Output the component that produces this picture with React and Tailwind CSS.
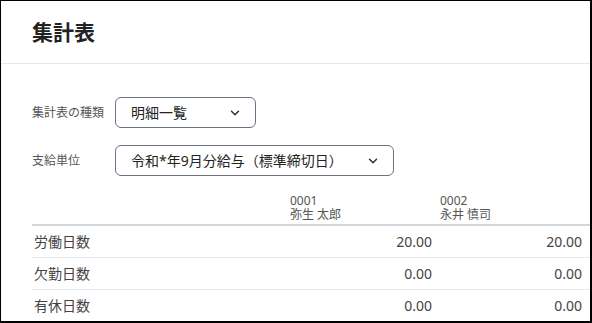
import { ChevronDown } from "lucide-react";

const employees = [
  { code: "0001", name: "弥生 太郎" },
  { code: "0002", name: "永井 慎司" },
];

const rows = [
  { label: "労働日数", values: ["20.00", "20.00"] },
  { label: "欠勤日数", values: ["0.00", "0.00"] },
  { label: "有休日数", values: ["0.00", "0.00"] },
];

function Select({ value, width }) {
  return (
    <div
      className={`${width} h-[31px] flex items-center justify-between pl-[15px] pr-[13px] border border-gray-500 rounded-md text-[14px] text-[#222]`}
    >
      <span>{value}</span>
      <ChevronDown size={14} strokeWidth={2.6} className="text-[#333]" />
    </div>
  );
}

export default function App() {
  return (
    <div
      className="w-[592px] h-[323px] overflow-hidden bg-white border-l border-t border-r-2 border-b-2 border-black"
      style={{ fontFamily: '"Noto Sans", "Noto Sans CJK JP", sans-serif' }}
    >
      <div className="h-[63px] flex items-center px-[31px] border-b border-gray-200">
        <h1 className="text-[21px] font-bold text-[#222] pt-[1px]">集計表</h1>
      </div>

      <div className="pl-[31px] pt-[33px] space-y-[17px]">
        <div className="flex items-center">
          <p className="w-[83px] text-[12px] text-[#555]">集計表の種類</p>
          <Select value="明細一覧" width="w-[141px]" />
        </div>
        <div className="flex items-center">
          <p className="w-[83px] text-[12px] text-[#555]">支給単位</p>
          <Select value="令和*年9月分給与（標準締切日）" width="w-[279px]" />
        </div>
      </div>

      <div className="ml-[31px] mt-[18px]">
        <div className="grid grid-cols-[254px_150px_150px] border-b-2 border-gray-300 pb-[2px]">
          <div />
          {employees.map((e) => (
            <p key={e.code} className="pl-[4px] text-[12px] leading-[14px] text-[#555]">
              {e.code}
              <br />
              {e.name}
            </p>
          ))}
        </div>
        {rows.map((r) => (
          <div
            key={r.label}
            className="grid grid-cols-[254px_150px_150px] h-[32px] items-center border-b border-gray-200 text-[14px] text-[#444]"
          >
            <p className="pl-[2px]">{r.label}</p>
            {r.values.map((v, i) => (
              <p key={i} className="text-right pr-[4px]">
                {v}
              </p>
            ))}
          </div>
        ))}
      </div>
    </div>
  );
}
